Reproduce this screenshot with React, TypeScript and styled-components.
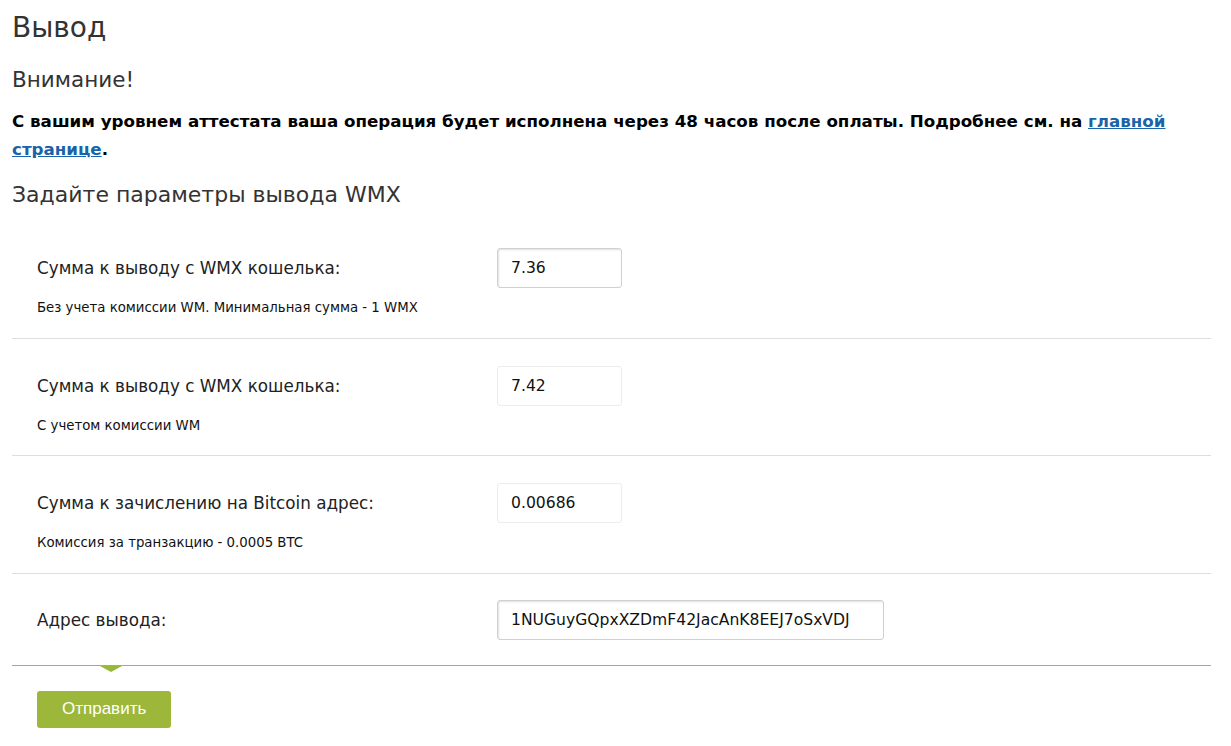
import React from 'react'
import styled, { createGlobalStyle } from 'styled-components'

const GlobalStyle = createGlobalStyle`
  body {
    margin: 0;
    background: #fff;
    font-family: "DejaVu Sans", Verdana, sans-serif;
    color: #222;
  }
`

const Page = styled.div`
  padding: 0 20px 0 12px;
`

const Title = styled.h1`
  margin: 0;
  padding-top: 9px;
  font-size: 28px;
  font-weight: normal;
  line-height: 38px;
  color: #333;
`

const Subtitle = styled.h2<{ $top: number; $size: number }>`
  margin: ${(p) => p.$top}px 0 0;
  font-size: ${(p) => p.$size}px;
  font-weight: normal;
  line-height: 30px;
  color: #333;
`

const Warning = styled.p`
  margin: 12px 0 0;
  font-size: 16.7px;
  font-weight: bold;
  line-height: 28px;
  color: #000;

  a {
    color: #1a63a8;
  }
`

const Form = styled.form`
  margin-top: 11px;
`

const Row = styled.div<{ $last?: boolean }>`
  display: grid;
  grid-template-columns: 460px 1fr;
  align-items: center;
  padding: ${(p) => (p.$last ? '26px 25px 25px' : '27px 25px 22.5px')};
  border-bottom: 1px solid ${(p) => (p.$last ? '#a3b455' : '#ddd')};
  position: relative;
`

const Label = styled.label`
  font-size: 16.8px;
  color: #222;
`

const Note = styled.div`
  grid-column: 1 / 3;
  margin-top: 12px;
  font-size: 13.3px;
  color: #111;
`

const Field = styled.input<{ $wide?: boolean; $active?: boolean }>`
  box-sizing: border-box;
  width: ${(p) => (p.$wide ? '387px' : '125px')};
  height: 40px;
  padding: 0 13px;
  font-family: "DejaVu Sans", Verdana, sans-serif;
  font-size: 15.6px;
  color: #111;
  background: #fff;
  border: 1px solid ${(p) => (p.$active ? '#d0d0d0' : '#ececec')};
  border-radius: 3px;
  box-shadow: ${(p) => (p.$active ? 'inset 1px 1px 2px rgba(0,0,0,0.12)' : 'none')};
  outline: none;
`

const Arrow = styled.span`
  position: absolute;
  left: 88px;
  bottom: -7px;
  width: 0;
  height: 0;
  border-left: 11px solid transparent;
  border-right: 11px solid transparent;
  border-top: 6px solid #9bb73a;
`

const Actions = styled.div`
  padding: 25px 25px 0;
`

const Submit = styled.button`
  height: 37px;
  padding: 0 25px;
  background: #9cb73a;
  color: #fff;
  border: none;
  border-radius: 3px;
  font-family: "Liberation Sans", Arial, sans-serif;
  font-size: 17px;
`

type Item = {
  label: string
  value: string
  note?: string
  wide?: boolean
  active?: boolean
}

const items: Item[] = [
  { label: 'Сумма к выводу с WMX кошелька:', value: '7.36', note: 'Без учета комиссии WM. Минимальная сумма - 1 WMX', active: true },
  { label: 'Сумма к выводу с WMX кошелька:', value: '7.42', note: 'С учетом комиссии WM' },
  { label: 'Сумма к зачислению на Bitcoin адрес:', value: '0.00686', note: 'Комиссия за транзакцию - 0.0005 BTC' },
  { label: 'Адрес вывода:', value: '1NUGuyGQpxXZDmF42JacAnK8EEJ7oSxVDJ', wide: true, active: true },
]

export default function App() {
  return (
    <Page>
      <GlobalStyle />
      <Title>Вывод</Title>
      <Subtitle $top={18} $size={21.5}>Внимание!</Subtitle>
      <Warning>
        С вашим уровнем аттестата ваша операция будет исполнена через 48 часов после оплаты. Подробнее см. на{' '}
        <a href="#">главной странице</a>.
      </Warning>
      <Subtitle $top={17} $size={22}>Задайте параметры вывода WMX</Subtitle>
      <Form onSubmit={(e) => e.preventDefault()}>
        {items.map((it, i) => {
          const last = i === items.length - 1
          return (
            <Row key={i} $last={last}>
              <Label>{it.label}</Label>
              <Field defaultValue={it.value} $wide={it.wide} $active={it.active} />
              {it.note && <Note>{it.note}</Note>}
              {last && <Arrow />}
            </Row>
          )
        })}
        <Actions>
          <Submit type="submit">Отправить</Submit>
        </Actions>
      </Form>
    </Page>
  )
}
